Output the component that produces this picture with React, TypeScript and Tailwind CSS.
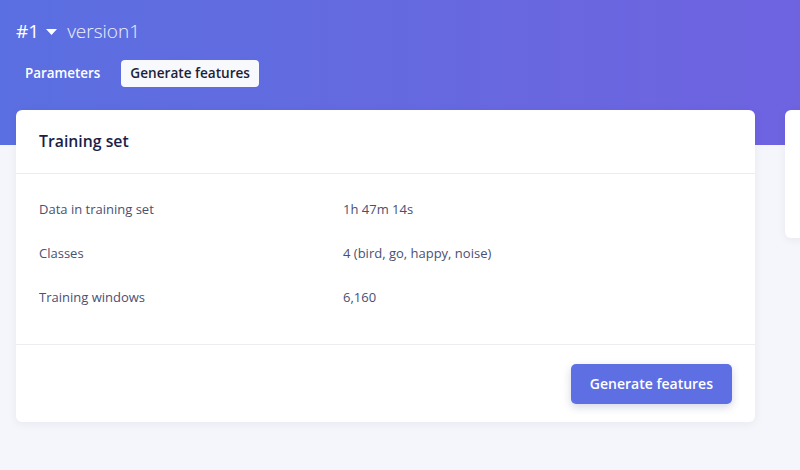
export default function App() {
  const rows = [
    ["Data in training set", "1h 47m 14s"],
    ["Classes", "4 (bird, go, happy, noise)"],
    ["Training windows", "6,160"],
  ];
  return (
    <div
      className="relative w-[800px] h-[470px] overflow-hidden bg-[#f5f6fb]"
      style={{ fontFamily: '"Open Sans", "Noto Sans", sans-serif' }}
    >
      <div className="absolute left-0 top-0 w-full h-[145px] bg-gradient-to-r from-[#5a6fe1] to-[#6f63e0]" />
      <div className="relative flex flex-col">
        <div className="flex items-center h-[62px] pl-[16px] pt-[1px] text-white">
          <span className="text-[19px] font-medium">#1</span>
          <svg width="11" height="6" viewBox="0 0 11 6" className="ml-[7px] mt-[1px]">
            <path d="M0 0 L11 0 L5.5 6 Z" fill="white" />
          </svg>
          <span className="ml-[10px] text-[19px] font-light text-white/90">version1</span>
        </div>
        <div className="flex items-center pl-[16px] gap-[12px] h-[27px] mt-[-2px]">
          <div className="px-[9px] h-[27px] flex items-center text-[13.4px] font-semibold text-white">Parameters</div>
          <div className="px-[9px] h-[27px] flex items-center rounded-[4px] bg-[#f8f9fc] text-[13.6px] font-semibold text-[#1d1f3a]">
            Generate features
          </div>
        </div>
        <div className="flex gap-[30px] pl-[16px] mt-[23px]">
          <div className="w-[739px] shrink-0 bg-white rounded-[6px] shadow-[0_2px_10px_rgba(30,40,90,0.06)] flex flex-col">
            <div className="h-[64px] flex items-center px-[23px] border-b border-[#ebedf2]">
              <span className="text-[15.8px] font-semibold text-[#1c1d4a]">Training set</span>
            </div>
            <div className="flex flex-col pt-[14px] pb-[24px]">
              {rows.map(([k, v]) => (
                <div key={k} className="flex h-[44px] items-center px-[23px] text-[13px] text-[#4a5072]">
                  <span className="w-[304px]">{k}</span>
                  <span>{v}</span>
                </div>
              ))}
            </div>
            <div className="border-t border-[#ebedf2] h-[78px] flex items-center justify-end pr-[23px]">
              <button className="h-[40px] px-[19px] rounded-[5px] bg-[#5d6fe3] text-white text-[14px] font-semibold shadow-[0_3px_8px_rgba(40,50,120,0.2)]">
                Generate features
              </button>
            </div>
          </div>
          <div className="w-[100px] h-[128px] shrink-0 bg-white rounded-[6px] shadow-[0_2px_10px_rgba(30,40,90,0.06)]" />
        </div>
      </div>
    </div>
  );
}
